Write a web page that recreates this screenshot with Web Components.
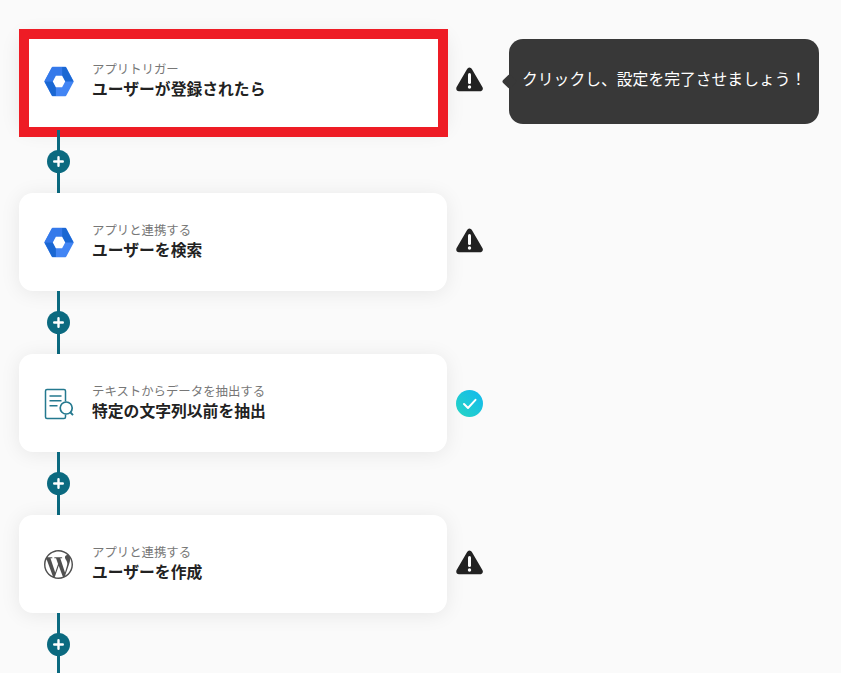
<!DOCTYPE html>
<html lang="ja">
<head>
<meta charset="utf-8">
<title>フロー</title>
<style>
  html, body { margin: 0; height: 100%; overflow: hidden; background: #fafafa; }
  body { font-family: "Noto Sans CJK JP", "Noto Sans", sans-serif; }
</style>
</head>
<body>
<template id="hex-tpl">
  <svg viewBox="0 0 30 30" width="32" height="31">
    <path d="M8.8 1.8 H21.2 L28.2 15 L21.2 28.2 H8.8 L1.8 15Z" fill="#4285f4" stroke="#4285f4" stroke-width="2" stroke-linejoin="round"/>
    <path d="M8.8 1 H18 V9.5 H12 L9 15 H1 L1.6 13.6 L8 1.6Z" fill="#3579ea"/>
    <path d="M18 1 H21.4 L22 1.6 L29 15 H21 L18 9.5Z" fill="#1a67d2"/>
    <path d="M12 29 H8.6 L8 28.4 L1 15 H9 L12 20.5Z" fill="#1a67d2"/>
    <path d="M12 9.5 H18 L21 15 L18 20.5 H12 L9 15Z" fill="#fff"/>
  </svg>
</template>

<script>
  class FlowApp extends HTMLElement {
    constructor() {
      super();
      this.attachShadow({ mode: 'open' }).innerHTML = `
        <style>
          :host { display: flex; flex-direction: column; padding: 32px 0 0 19px; }
        </style>
        <slot></slot>`;
    }
  }

  class FlowStep extends HTMLElement {
    constructor() {
      super();
      this.attachShadow({ mode: 'open' }).innerHTML = `
        <style>
          :host { display: block; }
          .row { display: flex; align-items: center; gap: 9px; position: relative; }
          .card {
            width: 428px; height: 98px; box-sizing: border-box; background: #fff; border-radius: 14px;
            box-shadow: 0 2px 20px rgba(0,0,0,.08);
            display: flex; align-items: center; padding-left: 24px; gap: 18px;
          }
          .icon { width: 31px; height: 31px; display: flex; align-items: center; justify-content: center; flex: none; }
          .text { display: flex; flex-direction: column; padding-bottom: 3px; }
          .label { font-size: 12.4px; line-height: 17px; color: #777; }
          .title { font-size: 15.8px; line-height: 21px; font-weight: 700; color: #222; }
          .mark { position: absolute; left: 0; top: -3px; width: 429px; height: 108px; box-sizing: border-box; border: 10px solid #ee1c25; display: none; }
          :host([marked]) .mark { display: block; }
          .line { width: 3px; height: 63px; margin-left: 38px; background: #0b6a80; position: relative; }
          .plus {
            position: absolute; left: -10px; top: 20px; width: 23px; height: 23px; border-radius: 50%;
            background: #0b6a80; display: flex; align-items: center; justify-content: center;
          }
          .status { width: 27px; display: flex; justify-content: center; }
        </style>
        <div class="row">
          <div class="card">
            <div class="icon"><slot name="icon"></slot></div>
            <div class="text">
              <span class="label"></span>
              <span class="title"></span>
            </div>
          </div>
          <div class="status"><slot name="status"></slot></div>
          <slot name="tip"></slot>
          <div class="mark"></div>
        </div>
        <div class="line">
          <div class="plus">
            <svg width="11" height="11" viewBox="0 0 11 11"><path d="M5.5 1.2v8.6M1.2 5.5h8.6" stroke="#fff" stroke-width="2.4" stroke-linecap="round"/></svg>
          </div>
        </div>`;
    }
    connectedCallback() {
      this.shadowRoot.querySelector('.label').textContent = this.getAttribute('label');
      this.shadowRoot.querySelector('.title').textContent = this.getAttribute('heading');
    }
  }

  class HexIcon extends HTMLElement {
    constructor() {
      super();
      const root = this.attachShadow({ mode: 'open' });
      root.innerHTML = '<style>:host { display: block; line-height: 0; filter: blur(.3px); }</style>';
      root.appendChild(document.getElementById('hex-tpl').content.cloneNode(true));
    }
  }

  class DocIcon extends HTMLElement {
    constructor() {
      super();
      this.attachShadow({ mode: 'open' }).innerHTML = `
        <style>:host { display: block; line-height: 0; filter: blur(.2px); }</style>
        <svg width="31" height="34" viewBox="0 0 31 34" fill="none" stroke="#24798f" stroke-width="1.5">
          <path d="M22.5 28.5 V31 Q22.5 32.5 21 32.5 H4 Q2.5 32.5 2.5 31 V5 Q2.5 3.5 4 3.5 H21 Q22.5 3.5 22.5 5 V15.5"/>
          <path d="M6.5 10h12M6.5 14.7h12M6.5 19.7h8" stroke-width="1.6"/>
          <circle cx="23.2" cy="22" r="6" stroke-width="1.7"/>
          <path d="M27.5 26.5 L30 29.2" stroke-width="1.9"/>
        </svg>`;
    }
  }

  class WpIcon extends HTMLElement {
    constructor() {
      super();
      this.attachShadow({ mode: 'open' }).innerHTML = `
        <style>:host { display: block; line-height: 0; filter: blur(.3px); }</style>
        <svg width="29" height="29" viewBox="0 0 24 24" fill="#505050"><path d="M21.469 6.825c.84 1.537 1.318 3.3 1.318 5.175 0 3.979-2.156 7.456-5.363 9.325l3.295-9.527c.615-1.54.82-2.771.82-3.864 0-.405-.026-.78-.07-1.11m-7.981.105c.647-.03 1.232-.105 1.232-.105.582-.075.514-.93-.067-.899 0 0-1.755.135-2.88.135-1.064 0-2.85-.15-2.85-.15-.585-.03-.661.855-.075.885 0 0 .54.061 1.125.09l1.68 4.605-2.37 7.08L5.354 6.9c.649-.03 1.234-.1 1.234-.1.585-.075.516-.93-.065-.896 0 0-1.746.138-2.874.138-.2 0-.438-.008-.69-.015C4.911 3.15 8.235 1.215 12 1.215c2.809 0 5.365 1.072 7.286 2.833-.046-.003-.091-.009-.141-.009-1.06 0-1.812.923-1.812 1.914 0 .89.513 1.643 1.06 2.531.411.72.89 1.643.89 2.977 0 .915-.354 1.994-.821 3.479l-1.075 3.585-3.9-11.61.001.014zM12 22.784c-1.059 0-2.081-.153-3.048-.437l3.237-9.406 3.315 9.087c.024.053.05.101.078.149-1.12.393-2.325.609-3.582.609M1.211 12c0-1.564.336-3.05.935-4.39L7.29 21.709C3.694 19.96 1.212 16.271 1.211 12M12 0C5.385 0 0 5.385 0 12s5.385 12 12 12 12-5.385 12-12S18.615 0 12 0"/></svg>`;
    }
  }

  class StatusWarn extends HTMLElement {
    constructor() {
      super();
      this.attachShadow({ mode: 'open' }).innerHTML = `
        <style>:host { display: block; line-height: 0; margin-bottom: 4px; }</style>
        <svg width="27" height="25" viewBox="0 0 27 25">
          <path d="M13.5 3.5 L24 21.5 H3Z" fill="#222" stroke="#222" stroke-width="5.5" stroke-linejoin="round"/>
          <path d="M13.5 7.5v8" stroke="#fff" stroke-width="3" stroke-linecap="round"/>
          <circle cx="13.5" cy="20" r="1.7" fill="#fff"/>
        </svg>`;
    }
  }

  class StatusDone extends HTMLElement {
    constructor() {
      super();
      this.attachShadow({ mode: 'open' }).innerHTML = `
        <style>:host { display: block; line-height: 0; margin-top: 1px; }</style>
        <svg width="27" height="27" viewBox="0 0 27 27">
          <defs><linearGradient id="g" x1="0" y1="1" x2="1" y2="0"><stop offset="0" stop-color="#26d6c2"/><stop offset="1" stop-color="#12b8f0"/></linearGradient></defs>
          <circle cx="13.5" cy="13.5" r="13.5" fill="url(#g)"/>
          <path d="M8 14 L12 18 L19.5 9.8" fill="none" stroke="#fff" stroke-width="2" stroke-linecap="round" stroke-linejoin="round"/>
        </svg>`;
    }
  }

  class FlowTip extends HTMLElement {
    constructor() {
      super();
      this.attachShadow({ mode: 'open' }).innerHTML = `
        <style>
          :host {
            position: absolute; left: 490px; top: 7px; width: 310px; height: 85px; box-sizing: border-box;
            background: #383838; border-radius: 14px; color: #fff; font-size: 15.8px;
            display: flex; align-items: center; padding: 0 0 6px 13px; white-space: nowrap;
          }
          :host::before {
            content: ""; position: absolute; left: -5px; top: 37px; width: 11px; height: 11px;
            background: #383838; transform: rotate(45deg); border-radius: 2px;
          }
        </style>
        <slot></slot>`;
    }
  }

  customElements.define('flow-app', FlowApp);
  customElements.define('flow-step', FlowStep);
  customElements.define('hex-icon', HexIcon);
  customElements.define('doc-icon', DocIcon);
  customElements.define('wp-icon', WpIcon);
  customElements.define('status-warn', StatusWarn);
  customElements.define('status-done', StatusDone);
  customElements.define('flow-tip', FlowTip);
</script>

<flow-app>
  <flow-step marked label="アプリトリガー" heading="ユーザーが登録されたら">
    <hex-icon slot="icon"></hex-icon>
    <status-warn slot="status"></status-warn>
    <flow-tip slot="tip">クリックし、設定を完了させましょう！</flow-tip>
  </flow-step>
  <flow-step label="アプリと連携する" heading="ユーザーを検索">
    <hex-icon slot="icon"></hex-icon>
    <status-warn slot="status"></status-warn>
  </flow-step>
  <flow-step label="テキストからデータを抽出する" heading="特定の文字列以前を抽出">
    <doc-icon slot="icon"></doc-icon>
    <status-done slot="status"></status-done>
  </flow-step>
  <flow-step label="アプリと連携する" heading="ユーザーを作成">
    <wp-icon slot="icon"></wp-icon>
    <status-warn slot="status"></status-warn>
  </flow-step>
</flow-app>
</body>
</html>
